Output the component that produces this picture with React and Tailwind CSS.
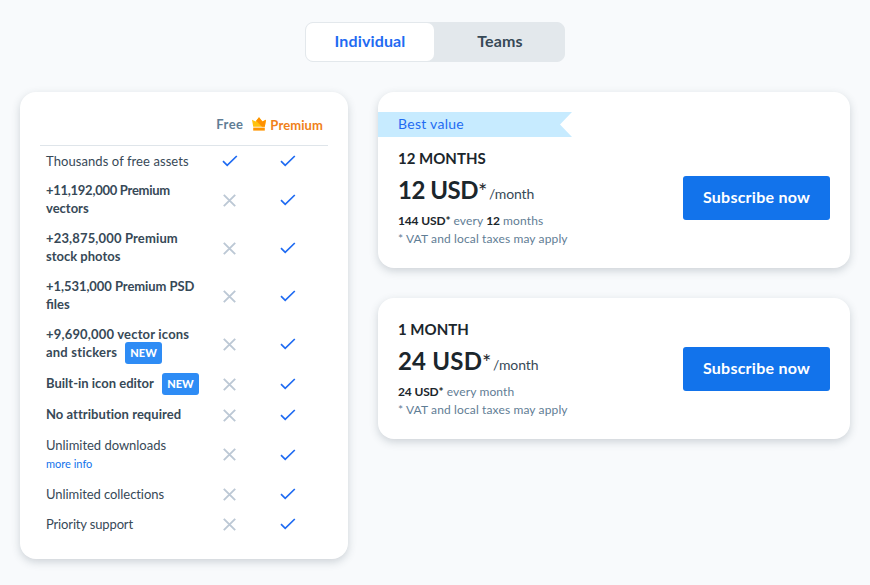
const features = [
  { lines: [['Thousands of free assets', 'tracking-[0.08px]']], free: true, row: 'h-[30px]' },
  { lines: [['+11,192,000 Premium', 'tracking-[-0.27px]'], ['vectors', '']], bold: true, row: 'h-12' },
  { lines: [['+23,875,000 Premium', 'tracking-[0.15px]'], ['stock photos', '']], bold: true, row: 'h-12' },
  { lines: [['+1,531,000 Premium PSD', 'tracking-[-0.06px]'], ['files', '']], bold: true, row: 'h-12' },
  { lines: [['+9,690,000 vector icons', 'tracking-[0.18px]'], ['and stickers', 'tracking-[0.2px]']], bold: true, isNew: true, row: 'h-12' },
  { lines: [['Built-in icon editor', '']], bold: true, isNew: true, row: 'h-8' },
  { lines: [['No attribution required', 'tracking-[0.04px]']], bold: true, row: 'h-[30px]' },
  { lines: [['Unlimited downloads', 'tracking-[-0.03px]']], link: 'more info', row: 'h-[49px]' },
  { lines: [['Unlimited collections', 'tracking-[-0.07px]']], row: 'h-[30px]' },
  { lines: [['Priority support', 'tracking-[-0.15px]']], row: 'h-[30px]' },
];

const plans = [
  { title: '12 MONTHS', price: '12 USD', priceTrack: 'tracking-[-0.5px]', total: '144 USD', count: '12', period: 'months', best: true },
  { title: '1 MONTH', price: '24 USD', priceTrack: 'tracking-[0.2px]', total: '24 USD', period: 'month' },
];

function Check() {
  return (
    <svg width="16" height="12" viewBox="0 0 16 12" fill="none" stroke="#1f6bf2" strokeWidth="1.7">
      <path d="M1 6.2 5.2 10.4 14.8 1" />
    </svg>
  );
}

function Cross() {
  return (
    <svg width="13" height="13" viewBox="0 0 13 13" fill="none" stroke="#bcc8d5" strokeWidth="1.9">
      <path d="M.8.8 12.2 12.2M12.2.8.8 12.2" />
    </svg>
  );
}

function Crown() {
  return (
    <svg width="14" height="14" viewBox="0 0 14 14">
      <path d="M0 2.8 3.6 4.6 7 0.2 10.4 4.6 14 2.8 12.8 9.8H1.2Z" fill="#ffc20e" />
      <path d="M4.2 3.8 7 0.2 10.4 4.6 14 2.8 12.8 9.8H10Z" fill="#ff9100" />
      <path d="M1.2 10.6H12.8V13.6H1.2Z" fill="#ff9500" />
    </svg>
  );
}

function FeatureRow({ feature }) {
  const { lines, bold, free, isNew, link, row } = feature;
  return (
    <div className={`grid grid-cols-[170px_38px_80px] items-center ${row}`}>
      <div className={`pl-1.5 text-[13px] leading-[18px] whitespace-nowrap text-[#374957] ${bold ? 'font-bold' : ''}`}>
        {lines.map(([line, track], i) => (
          <div key={line} className="flex h-[18px] items-center">
            <span className={`${bold ? 'pb-0.5' : 'pb-px'} ${track}`}>{line}</span>
            {isNew && i === lines.length - 1 && (
              <span className="ml-2 flex h-[22px] w-[37px] shrink-0 items-center justify-center rounded-[3px] bg-[#2e8cf5] text-[11px] font-black text-white">
                NEW
              </span>
            )}
          </div>
        ))}
        {link && <a href="#" className="block text-[11px] leading-[18px] text-[#1273eb]">{link}</a>}
      </div>
      <div className="flex justify-center pl-px">{free ? <Check /> : <Cross />}</div>
      <div className="flex justify-center"><Check /></div>
    </div>
  );
}

function PlanCard({ plan }) {
  return (
    <div className="rounded-2xl bg-white py-5 shadow-[0_3px_8px_rgba(55,73,87,0.22)]">
      {plan.best && (
        <div className="mb-2.5 h-[25px] w-[194px] bg-[#c7ebff] pl-5 text-sm leading-[24px] tracking-[0.28px] text-[#1f6bf2] [clip-path:polygon(0_0,100%_0,182px_50%,100%_100%,0_100%)]">
          Best value
        </div>
      )}
      <div className="flex items-center justify-between px-5">
        <div className="text-xs leading-[18px] tracking-[0.13px] text-[#5f7d95]">
          <h3 className="text-[15px] leading-[22px] font-bold tracking-normal text-[#1b262c]">{plan.title}</h3>
          <p className="flex h-[43px] items-baseline text-2xl leading-[41px] tracking-normal text-[#1b262c]">
            <span className={`font-bold ${plan.priceTrack}`}>{plan.price}</span>
            <span className="w-[11px] text-[22px]">*</span>
            <span className="text-sm tracking-[-0.1px] text-[#374957]">/month</span>
          </p>
          <p>
            <b className="tracking-[-0.15px] text-[#1b262c]">{plan.total}*</b> every {plan.count && <b className="tracking-[-0.15px] text-[#1b262c]">{plan.count}</b>}
            {plan.count && ' '}
            {plan.period}
          </p>
          <p>* VAT and local taxes may apply</p>
        </div>
        <button className="h-11 w-[147px] rounded-[3px] bg-[#1273eb] pb-0.5 text-base font-bold tracking-[0.25px] text-white">
          Subscribe now
        </button>
      </div>
    </div>
  );
}

export default function App() {
  return (
    <div className="h-[585px] w-[870px] bg-[#f8fafc] px-5 pt-[22px] font-['Lato','Liberation_Sans',sans-serif]">
      <div className="mx-auto flex h-10 w-[260px] rounded-lg border border-[#e3e8ec] bg-[#e3e8ec] text-base font-bold tracking-[0.15px] text-[#374957]">
        <button className="w-32 rounded-[7px] bg-white pb-0.5 text-[#1f6bf2]">Individual</button>
        <button className="flex-1 pb-0.5 pl-0.5">Teams</button>
      </div>
      <div className="mt-[30px] flex items-start gap-[30px]">
        <div className="w-[328px] rounded-2xl bg-white p-5 shadow-[0_3px_8px_rgba(55,73,87,0.22)]">
          <div className="flex h-[34px] items-start justify-end border-b border-[#dfe5ea] pr-[5px] text-[13px] font-bold">
            <span className="pt-[3px] leading-[18px] tracking-[0.4px] text-[#5f7d95]">Free</span>
            <span className="ml-[9px] flex items-start gap-1 pt-1 leading-[18px] tracking-[0.1px] text-[#f08119]">
              <span className="pt-px"><Crown /></span>
              Premium
            </span>
          </div>
          {features.map((feature) => (
            <FeatureRow key={feature.lines[0][0]} feature={feature} />
          ))}
        </div>
        <div className="flex flex-1 flex-col gap-[30px]">
          {plans.map((plan) => (
            <PlanCard key={plan.title} plan={plan} />
          ))}
        </div>
      </div>
    </div>
  );
}
